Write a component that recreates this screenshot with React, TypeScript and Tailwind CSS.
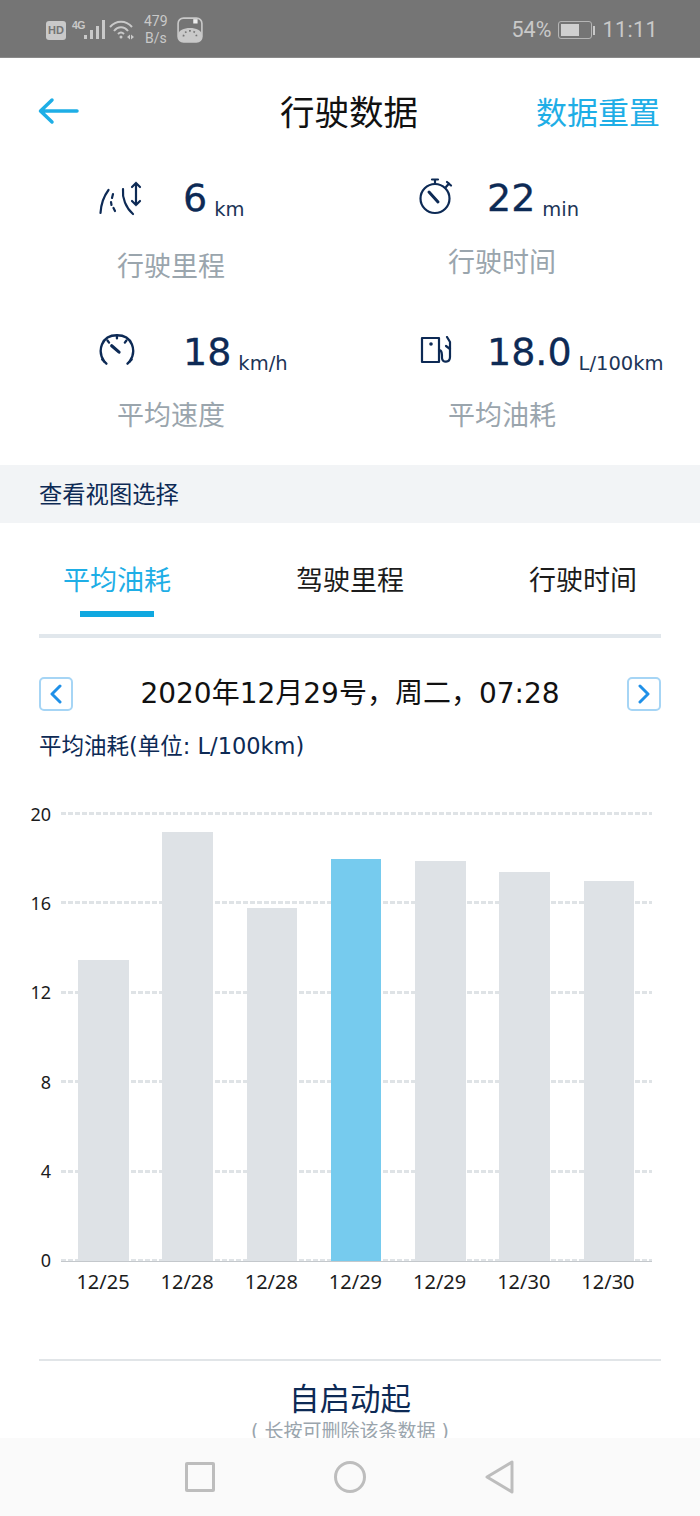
const FONT = "font-['DejaVu_Sans','Noto_Sans_CJK_SC',sans-serif]"

const BARS = [
  { label: "12/25", height: 301 },
  { label: "12/28", height: 429 },
  { label: "12/28", height: 353 },
  { label: "12/29", height: 402, active: true },
  { label: "12/29", height: 400 },
  { label: "12/30", height: 389 },
  { label: "12/30", height: 380 },
]

const TICKS = ["20", "16", "12", "8", "4", "0"]

function RoadIcon() {
  return (
    <svg width="44" height="36" viewBox="0 0 44 36" fill="none" stroke="#0d2a55" strokeWidth="2.2" strokeLinecap="round">
      <path d="M2.5 33 C3 24 6 16 10.5 10" />
      <path d="M15 14 L14 18 M13 22 L13.5 25 M15.5 28 L17 31" />
      <path d="M25 9 C24 18 28 28 35 34" />
      <path d="M38 3 V25 M34 7 L38 3 L42 7 M34 21 L38 25 L42 21" />
    </svg>
  )
}

function TimerIcon() {
  return (
    <svg width="34" height="38" viewBox="0 0 34 38" fill="none" stroke="#0d2a55" strokeWidth="2.2" strokeLinecap="round" className="-mt-[3px]">
      <circle cx="16" cy="20.5" r="14.5" />
      <path d="M16 6 V2 M13 1.5 H19 M27 9 L30 5.5 M28 4 L32 7.5" />
      <path d="M10 14 L19 24" strokeWidth="3" />
    </svg>
  )
}

function GaugeIcon() {
  return (
    <svg width="40" height="34" viewBox="0 0 38 32" fill="none" stroke="#0d2a55" strokeWidth="2.2" strokeLinecap="round" className="-mt-[4px]">
      <path d="M6 27 C-1 17 3 2 18 2 C33 2 37 17 30 27" />
      <path d="M4 25 L8 29 M32 25 L28 29 M18 2 V5 M9 7 L10.5 9 M27 7 L25.5 9" />
      <path d="M13 12 L20 18" strokeWidth="3" />
    </svg>
  )
}

function FuelIcon() {
  return (
    <svg width="33" height="28" viewBox="0 0 33 28" fill="none" stroke="#0d2a55" strokeWidth="2.2" strokeLinecap="round" strokeLinejoin="round" className="-mt-[4px]">
      <path d="M3 2 H20 V26 H3 Z" />
      <circle cx="12" cy="8" r="1.8" fill="#0d2a55" stroke="none" />
      <path d="M20 14 C23 14 23 18 23 22 C23 27 31 27 31 21 V6 L28 1" />
      <path d="M27 10 L31 13" />
    </svg>
  )
}

function StatusBar() {
  return (
    <div className="flex h-[58px] shrink-0 items-center justify-between border-b border-[#8a8a8a] bg-[#757575] pl-[46px] pr-[42px] pt-[3px] text-[#c9c9c9]">
      <div className="flex items-center">
        <span className="flex h-[19px] w-[20px] items-center justify-center rounded-[3px] bg-[#c9c9c9] font-['Liberation_Sans',sans-serif] text-[11px] font-bold text-[#757575]">HD</span>
        <span className="ml-[6px] mb-[9px] font-['Liberation_Sans',sans-serif] text-[10.5px] font-bold tracking-[-0.6px]">4G</span>
        <svg width="22" height="22" viewBox="0 0 22 22" fill="#c9c9c9" className="-ml-[1px]">
          <rect x="0" y="16" width="3" height="4" />
          <rect x="6" y="11" width="3" height="9" />
          <rect x="12" y="7" width="3" height="13" />
          <rect x="18" y="1" width="3" height="19" />
        </svg>
        <svg width="26" height="22" viewBox="0 0 26 22" fill="none" stroke="#c9c9c9" strokeWidth="2" className="ml-[3px]">
          <path d="M1 8 C7 1 17 1 23 8" />
          <path d="M5 12 C9 7 15 7 19 12" />
          <path d="M9 15 C11 13 13 13 15 15" />
          <circle cx="12" cy="18" r="1.5" fill="#c9c9c9" stroke="none" />
          <path d="M18 18 L21 15.5 V20.5 Z M25 18 L22 15.5 V20.5 Z" fill="#c9c9c9" stroke="none" />
        </svg>
        <div className="ml-[8px] flex w-[26px] flex-col items-center font-['Roboto',sans-serif] text-[14px] leading-[17px]">
          <span>479</span>
          <span>B/s</span>
        </div>
        <svg width="26" height="26" viewBox="0 0 24 24" className="ml-[8px]">
          <rect x="1" y="1" width="22" height="22" rx="5" fill="none" stroke="#c9c9c9" strokeWidth="1.5" />
          <path d="M1 17 C1 8 23 8 23 17 V18 A5 5 0 0 1 18 23 H6 A5 5 0 0 1 1 18 Z" fill="#c9c9c9" />
          <rect x="15" y="2" width="4" height="4" fill="#ededed" />
          <path d="M6 18 C6 11 18 11 18 18" fill="none" stroke="#757575" strokeWidth="1.6" strokeDasharray="1.5 2.5" />
        </svg>
      </div>
      <div className="flex items-center font-['Roboto',sans-serif] text-[21.5px]">
        <span>54%</span>
        <span className="ml-[7px] flex h-[18px] w-[34px] items-center rounded-[3px] border border-[#b5b5b5] p-[2px]">
          <span className="h-full w-[18px] bg-[#d0d0d0]" />
        </span>
        <span className="ml-[1px] h-[9px] w-[2px] bg-[#c9c9c9]" />
        <span className="ml-[7px] tracking-[0.4px]">11:11</span>
      </div>
    </div>
  )
}

function Stat({
  icon,
  iconClass,
  value,
  unit,
  label,
  labelClass,
}: {
  icon: React.ReactNode
  iconClass: string
  value: string
  unit: string
  label: string
  labelClass: string
}) {
  return (
    <div className="flex flex-col">
      <div className="flex h-[50px] items-center">
        <div className={`flex shrink-0 ${iconClass}`}>{icon}</div>
        <span className="text-[38px] leading-none text-[#0d2a55] [-webkit-text-stroke:0.3px_#0d2a55]">{value}</span>
        <span className="ml-[7px] mt-[24px] whitespace-nowrap text-[19.5px] leading-none text-[#1d3557]">{unit}</span>
      </div>
      <span className={`text-[27px] leading-none text-[#9aa5ad] ${labelClass}`}>{label}</span>
    </div>
  )
}

function DayChart() {
  return (
    <div className="relative mt-[56px] h-[478px] text-[#1c1c1c]">
      <div className="absolute left-0 right-0 top-[-9px] flex h-[465px] flex-col justify-between">
        {TICKS.map((t) => (
          <div key={t} className="flex h-[18px] items-center">
            <span className="w-[61px] pr-[10px] text-right font-['Noto_Sans',sans-serif] text-[18px] leading-none">{t}</span>
            <div className="h-[3px] w-[591px] bg-[repeating-linear-gradient(to_right,#dfe3e6_0_5px,transparent_5px_7px)]" />
          </div>
        ))}
      </div>
      <div className="relative ml-[78px] flex h-[447px] w-[556px] items-end justify-between">
        {BARS.map((bar, i) => (
          <div
            key={i}
            className={bar.active ? "w-[50.5px] bg-[#76cbee]" : "w-[50.5px] bg-[#dee2e6]"}
            style={{ height: bar.height }}
          />
        ))}
      </div>
      <div className="absolute left-[61px] top-[447px] h-px w-[591px] bg-[#c4c8cc]" />
      <div className="ml-[63px] mt-[11px] flex w-[585px] justify-between font-['Noto_Sans',sans-serif] text-[20px] leading-none">
        {BARS.map((bar, i) => (
          <span key={i} className="w-[80px] text-center">{bar.label}</span>
        ))}
      </div>
    </div>
  )
}

export default function App() {
  return (
    <div className={`flex h-[1516px] w-[700px] flex-col overflow-hidden bg-white ${FONT}`}>
      <StatusBar />
      <main className="min-h-0 flex-1 overflow-hidden">
        <header className="grid h-[110px] grid-cols-[1fr_auto_1fr] items-center pl-[38px] pr-[40px]">
          <svg width="41" height="28" viewBox="0 0 41 28" fill="none" stroke="#1eaee6" strokeWidth="3.5" strokeLinecap="round" strokeLinejoin="round" className="-mt-[5px]">
            <path d="M39 14 H3 M14 3 L2.5 14 L14 25" />
          </svg>
          <h1 className="text-[34.5px] leading-none text-[#111]">行驶数据</h1>
          <span className="justify-self-end text-[31px] leading-none text-[#1eaee6]">数据重置</span>
        </header>
        <section className="grid h-[297px] grid-cols-[321px_1fr] pl-[98px] pt-[5px]">
          <div className="flex flex-col gap-[47px]">
            <Stat icon={<RoadIcon />} iconClass="w-[85px]" value="6" unit="km" label="行驶里程" labelClass="ml-[19px] mt-[30px]" />
            <Stat icon={<GaugeIcon />} iconClass="w-[85px]" value="18" unit="km/h" label="平均速度" labelClass="ml-[19px] mt-[25px]" />
          </div>
          <div className="flex flex-col gap-[51px]">
            <Stat icon={<TimerIcon />} iconClass="w-[68px]" value="22" unit="min" label="行驶时间" labelClass="ml-[29px] mt-[26px]" />
            <Stat icon={<FuelIcon />} iconClass="w-[68px]" value="18.0" unit="L/100km" label="平均油耗" labelClass="ml-[29px] mt-[25px]" />
          </div>
        </section>
        <div className="flex h-[58px] items-center bg-[#f2f4f6] pl-[39px] pt-[2px] text-[23.3px] text-[#0d2a55]">查看视图选择</div>
        <nav className="mx-[39px] flex h-[115px] justify-between border-b-4 border-[#e1e7ec] px-[24px] pt-[44px] text-[27px] leading-none text-[#1c1c1c]">
          <div className="flex w-[108px] flex-col items-center">
            <span className="text-[#1eaee6]">平均油耗</span>
            <span className="mt-[17px] h-[6px] w-[74px] bg-[#0fa8e0]" />
          </div>
          <span>驾驶里程</span>
          <span>行驶时间</span>
        </nav>
        <div className="mx-[39px] mt-[38px] flex h-[36px] items-center justify-between">
          <button className="flex h-[34px] w-[34px] items-center justify-center rounded-[5px] border-2 border-[#a6d5f5]">
            <svg width="14" height="20" viewBox="0 0 14 20" fill="none" stroke="#1f90e8" strokeWidth="3" strokeLinecap="round" strokeLinejoin="round">
              <path d="M11 2 L3 10 L11 18" />
            </svg>
          </button>
          <span className="text-[28px] leading-none text-[#111]">2020年12月29号，周二，07:28</span>
          <button className="flex h-[34px] w-[34px] items-center justify-center rounded-[5px] border-2 border-[#a6d5f5]">
            <svg width="14" height="20" viewBox="0 0 14 20" fill="none" stroke="#1f90e8" strokeWidth="3" strokeLinecap="round" strokeLinejoin="round">
              <path d="M3 2 L11 10 L3 18" />
            </svg>
          </button>
        </div>
        <p className="ml-[39px] mt-[23px] text-[22.5px] leading-none text-[#0d2a55]">平均油耗(单位: L/100km)</p>
        <DayChart />
        <div className="mx-[39px] mt-[67px] flex flex-col items-center border-t-2 border-[#e1e5e8] pt-[24px]">
          <span className="text-[30.5px] leading-none text-[#0d2a55]">自启动起</span>
          <span className="mt-[7px] text-[19px] leading-none text-[#9aa5ad]">( 长按可删除该条数据 )</span>
        </div>
      </main>
      <footer className="flex h-[78px] shrink-0 items-center justify-center gap-[119px] bg-[#fafafa] pb-[1px]">
        <span className="h-[30px] w-[30px] rounded-[2px] border-[3px] border-[#bdbdbd]" />
        <span className="h-[32px] w-[32px] rounded-full border-[3px] border-[#bdbdbd]" />
        <svg width="30" height="34" viewBox="0 0 30 34" fill="none" stroke="#bdbdbd" strokeWidth="3" strokeLinejoin="round">
          <path d="M27 2 V32 L2 17 Z" />
        </svg>
      </footer>
    </div>
  )
}
